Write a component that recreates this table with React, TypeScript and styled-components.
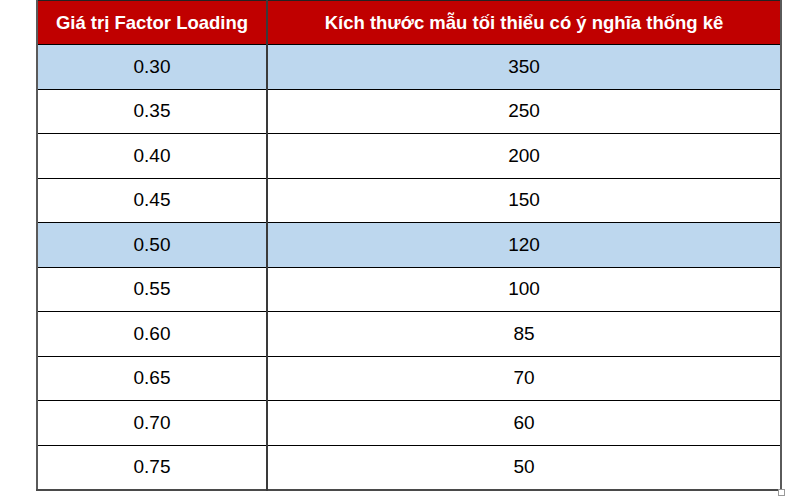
import styled, { createGlobalStyle } from 'styled-components';

const GlobalStyle = createGlobalStyle`
  html, body {
    margin: 0;
    padding: 0;
    background: #ffffff;
    font-family: 'Liberation Sans', Arial, sans-serif;
  }
`;

const Page = styled.div`
  width: 800px;
  height: 499px;
  padding-left: 36px;
  box-sizing: border-box;
  overflow: hidden;
`;

const Frame = styled.div`
  position: relative;
  width: 744px;
`;

const Table = styled.table`
  width: 744px;
  border-collapse: collapse;
  table-layout: fixed;
  border-left: 2px solid #5a5a5a;
  border-right: 2px solid #5a5a5a;
  border-bottom: 2px solid #4a4a4a;
  border-top: 1px solid #222;
`;

const HeadCell = styled.th`
  height: 43px;
  padding: 0;
  background: #c00000;
  color: #ffffff;
  font-size: 18.5px;
  font-weight: bold;
  text-align: center;
  vertical-align: middle;
  border-bottom: 1px solid #000;
  & + & {
    border-left: 2px solid #3a3a3a;
  }
`;

const Row = styled.tr<{ $highlight?: boolean }>`
  background: ${(p) => (p.$highlight ? '#bdd7ee' : '#ffffff')};
`;

const Cell = styled.td`
  height: 43.5px;
  padding: 0;
  color: #000;
  font-size: 19px;
  text-align: center;
  vertical-align: middle;
  border-bottom: 1px solid #000;
  & + & {
    border-left: 2px solid #3a3a3a;
  }
`;

const Handle = styled.span`
  position: absolute;
  right: -5px;
  bottom: -5px;
  width: 5px;
  height: 5px;
  border: 1px solid #999;
  background: #fff;
`;

const rows: { loading: string; size: number; highlight?: boolean }[] = [
  { loading: '0.30', size: 350, highlight: true },
  { loading: '0.35', size: 250 },
  { loading: '0.40', size: 200 },
  { loading: '0.45', size: 150 },
  { loading: '0.50', size: 120, highlight: true },
  { loading: '0.55', size: 100 },
  { loading: '0.60', size: 85 },
  { loading: '0.65', size: 70 },
  { loading: '0.70', size: 60 },
  { loading: '0.75', size: 50 },
];

export default function App() {
  return (
    <>
      <GlobalStyle />
      <Page>
        <Frame>
          <Table>
            <colgroup>
              <col style={{ width: 230 }} />
              <col style={{ width: 514 }} />
            </colgroup>
            <thead>
              <tr>
                <HeadCell>Giá trị Factor Loading</HeadCell>
                <HeadCell>Kích thước mẫu tối thiểu có ý nghĩa thống kê</HeadCell>
              </tr>
            </thead>
            <tbody>
              {rows.map((r) => (
                <Row key={r.loading} $highlight={r.highlight}>
                  <Cell>{r.loading}</Cell>
                  <Cell>{r.size}</Cell>
                </Row>
              ))}
            </tbody>
          </Table>
          <Handle />
        </Frame>
      </Page>
    </>
  );
}
